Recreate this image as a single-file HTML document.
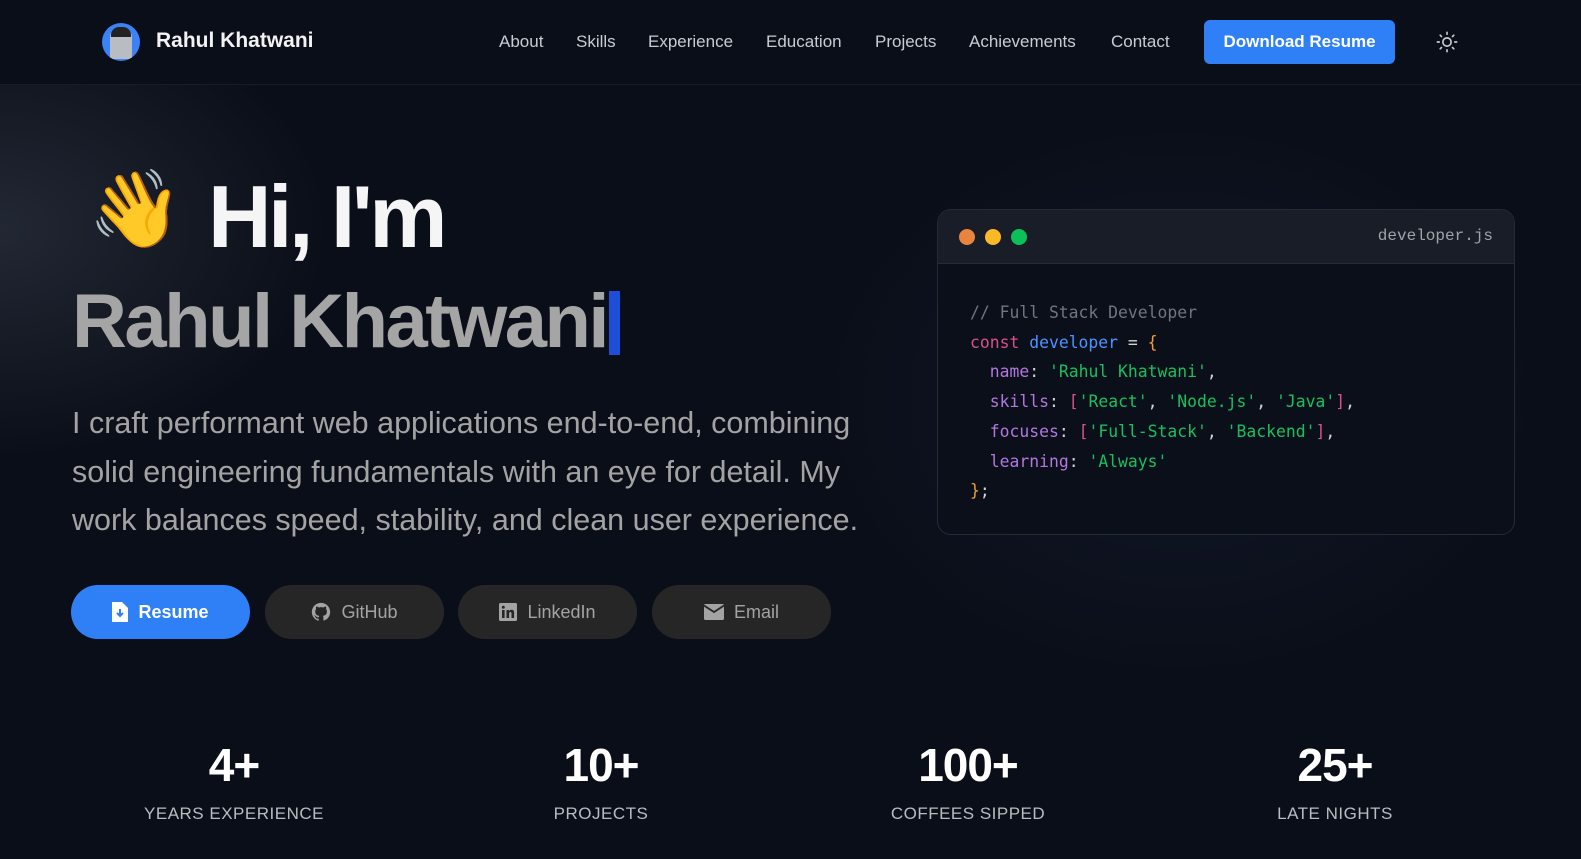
<!DOCTYPE html>
<html><head><meta charset="utf-8"><style>
*{margin:0;padding:0;box-sizing:border-box}
body{width:1581px;height:859px;overflow:hidden;background:#0a0e18;font-family:"Liberation Sans",sans-serif;color:#fff;position:relative}
.glow1{position:absolute;left:-160px;top:60px;width:520px;height:420px;background:radial-gradient(ellipse at 30% 40%,rgba(120,130,150,0.22),rgba(10,14,24,0) 65%)}
.glow2{position:absolute;left:780px;top:90px;width:800px;height:620px;background:radial-gradient(ellipse at center,rgba(25,32,55,0.55),rgba(10,14,24,0) 65%)}
nav{position:absolute;top:0;left:0;width:1581px;height:85px;border-bottom:1px solid #171c27;background:#0a0e18}
.logo{position:absolute;left:102px;top:23px;width:38px;height:38px;border-radius:50%;background:#3b82f6;overflow:hidden}
.logo i{position:absolute;left:8px;top:6px;width:22px;height:30px;background:#b9bcc2;border-radius:8px 8px 2px 2px}
.logo b{position:absolute;left:9px;top:4px;width:20px;height:10px;background:#222;border-radius:8px 8px 0 0}
.name{position:absolute;left:156px;top:29px;font-size:21px;font-weight:bold;color:#f2f2f2}
.links{position:absolute;top:32px;left:499px;font-size:17px;color:#c9ccd2}
.links span{position:absolute;white-space:nowrap}
.dl{position:absolute;left:1204px;top:20px;width:191px;height:44px;background:#2f80f7;border-radius:6px;font-size:17px;font-weight:bold;text-align:center;line-height:44px;color:#fff}
.sun{position:absolute;left:1436px;top:31px}
h1{position:absolute;left:208px;top:166px;font-size:88px;font-weight:bold;color:#f5f5f5;letter-spacing:-3.5px}
.hand{position:absolute;left:88px;top:164px;font-size:76px;font-family:"Noto Color Emoji","DejaVu Sans",sans-serif}
h2{position:absolute;left:72px;top:278px;font-size:76px;font-weight:bold;color:#a5a5a5;letter-spacing:-2.5px;white-space:nowrap}
.cur{display:inline-block;width:11px;height:64px;background:#1d4ed8;vertical-align:-8px;margin-left:2px}
p.d{position:absolute;left:72px;top:399px;width:830px;font-size:30.5px;line-height:48.5px;color:#a3a3a3}
.btn{position:absolute;top:585px;width:179px;height:54px;border-radius:27px;background:#262626;color:#a3a3a3;font-size:18px;display:flex;align-items:center;justify-content:center;gap:10px}
.btn.p{background:#2f80f7;color:#fff;font-weight:bold}
.code{position:absolute;left:937px;top:209px;width:578px;height:326px;border:1px solid #252a36;border-radius:14px;background:#0b0f19;overflow:hidden}
.bar{height:54px;background:#191d27;border-bottom:1px solid #252a36;position:relative}
.dot{position:absolute;top:19px;width:16px;height:16px;border-radius:50%}
.fn{position:absolute;right:21px;top:17px;font-family:"Liberation Mono",monospace;font-size:16px;color:#a0a3aa}
pre{position:absolute;left:32px;top:88px;font-family:"DejaVu Sans Mono","Liberation Mono",monospace;font-size:16.4px;line-height:29.7px;color:#d4d4d4}
.c{color:#71757e}.k{color:#d9508a}.v{color:#4d93ff}.o{color:#f0a030}.pp{color:#b277e0}.s{color:#16c060}.br{color:#d9508a}
.st{position:absolute;top:738px;text-align:center;width:300px}
.st b{display:block;font-size:46px;color:#fff;letter-spacing:-1px}
.st span{display:block;margin-top:12px;font-size:17px;letter-spacing:0.5px;color:#b9bcc2}
</style></head><body>
<div class="glow1"></div><div class="glow2"></div>
<nav>
<div class="logo"><i></i><b></b></div>
<div class="name">Rahul Khatwani</div>
<div class="links"><span style="left:0">About</span><span style="left:77px">Skills</span><span style="left:149px">Experience</span><span style="left:267px">Education</span><span style="left:376px">Projects</span><span style="left:470px">Achievements</span><span style="left:612px">Contact</span></div>
<div class="dl">Download Resume</div>
<svg class="sun" width="22" height="22" viewBox="0 0 24 24" fill="none" stroke="#c9ccd2" stroke-width="1.8" stroke-linecap="round"><circle cx="12" cy="12" r="4.5"/><path d="M12 1.5v2M12 20.5v2M1.5 12h2M20.5 12h2M4.6 4.6l1.4 1.4M18 18l1.4 1.4M4.6 19.4L6 18M18 6l1.4-1.4"/></svg>
</nav>
<div class="hand">👋</div>
<h1>Hi, I'm</h1>
<h2>Rahul Khatwani<span class="cur"></span></h2>
<p class="d">I craft performant web applications end-to-end, combining solid engineering fundamentals with an eye for detail. My work balances speed, stability, and clean user experience.</p>
<div class="btn p" style="left:71px"><svg width="16" height="20" viewBox="0 0 16 20"><path d="M0 0h10l6 6v14H0z" fill="#fff"/><path d="M8 7v7M5 11l3 3 3-3" stroke="#2f80f7" stroke-width="2" fill="none"/></svg>Resume</div>
<div class="btn" style="left:265px"><svg width="20" height="20" viewBox="0 0 24 24" fill="#a3a3a3"><path d="M12 1C5.9 1 1 5.9 1 12c0 4.9 3.2 9 7.5 10.4.6.1.8-.2.8-.5v-2c-3.1.7-3.700-1.4-3.7-1.4-.5-1.3-1.2-1.6-1.2-1.6-1-.7.1-.7.1-.7 1.1.1 1.7 1.1 1.7 1.1 1 1.700 2.6 1.2 3.2.9.1-.7.4-1.2.7-1.5-2.4-.3-5-1.2-5-5.4 0-1.2.4-2.2 1.1-2.9-.1-.3-.5-1.4.1-2.9 0 0 .9-.3 3 1.1.9-.2 1.8-.4 2.8-.4s1.9.1 2.8.4c2.1-1.4 3-1.1 3-1.1.6 1.5.2 2.6.1 2.9.7.8 1.1 1.7 1.1 2.9 0 4.2-2.6 5.1-5 5.4.4.3.8 1 .8 2v3c0 .3.2.6.8.5C19.8 21 23 16.9 23 12 23 5.9 18.1 1 12 1z"/></svg>GitHub</div>
<div class="btn" style="left:458px"><svg width="18" height="18" viewBox="0 0 18 18"><rect width="18" height="18" rx="1.5" fill="#a3a3a3"/><rect x="3" y="7" width="2.6" height="8" fill="#262626"/><circle cx="4.3" cy="4.2" r="1.5" fill="#262626"/><path d="M7.5 7h2.4v1.2c.5-.8 1.4-1.4 2.6-1.4 2 0 2.6 1.3 2.6 3.2V15h-2.6v-4.4c0-1-.3-1.6-1.1-1.6-.9 0-1.3.7-1.3 1.6V15H7.5z" fill="#262626"/></svg>LinkedIn</div>
<div class="btn" style="left:652px"><svg width="20" height="16" viewBox="0 0 20 16"><rect width="20" height="16" rx="1.5" fill="#a3a3a3"/><path d="M0 1.5l10 6.5 10-6.5" stroke="#262626" stroke-width="1.8" fill="none"/></svg>Email</div>
<div class="code">
<div class="bar"><div class="dot" style="left:21px;background:#e8843d"></div><div class="dot" style="left:47px;background:#fbb928"></div><div class="dot" style="left:73px;background:#0cc157"></div><div class="fn">developer.js</div></div>
<pre><span class="c">// Full Stack Developer</span>
<span class="k">const</span> <span class="v">developer</span> = <span class="o">{</span>
  <span class="pp">name</span>: <span class="s">'Rahul Khatwani'</span>,
  <span class="pp">skills</span>: <span class="br">[</span><span class="s">'React'</span>, <span class="s">'Node.js'</span>, <span class="s">'Java'</span><span class="br">]</span>,
  <span class="pp">focuses</span>: <span class="br">[</span><span class="s">'Full-Stack'</span>, <span class="s">'Backend'</span><span class="br">]</span>,
  <span class="pp">learning</span>: <span class="s">'Always'</span>
<span class="o">}</span>;</pre>
</div>
<div class="st" style="left:84px"><b>4+</b><span>YEARS EXPERIENCE</span></div>
<div class="st" style="left:451px"><b>10+</b><span>PROJECTS</span></div>
<div class="st" style="left:818px"><b>100+</b><span>COFFEES SIPPED</span></div>
<div class="st" style="left:1185px"><b>25+</b><span>LATE NIGHTS</span></div>
</body></html>
